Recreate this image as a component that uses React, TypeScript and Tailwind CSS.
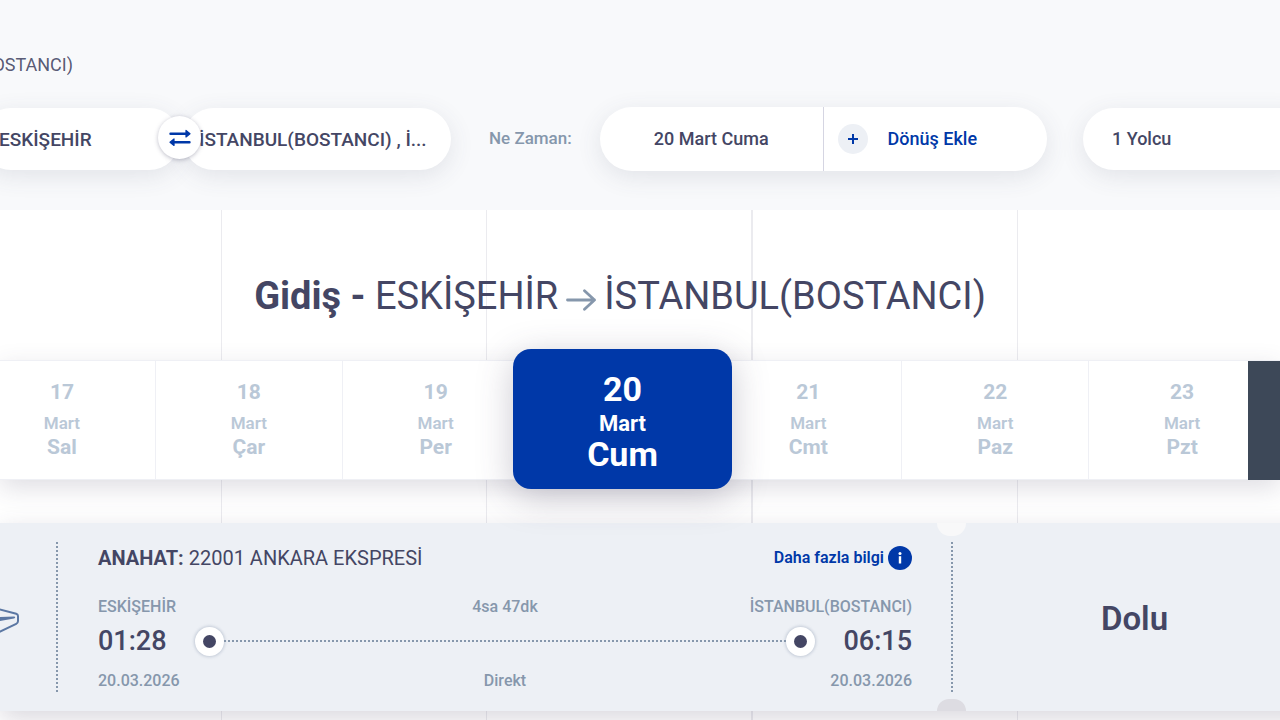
type Day = { day: string; month: string; weekday: string; selected?: boolean };

const days: Day[] = [
  { day: "17", month: "Mart", weekday: "Sal" },
  { day: "18", month: "Mart", weekday: "Çar" },
  { day: "19", month: "Mart", weekday: "Per" },
  { day: "20", month: "Mart", weekday: "Cum", selected: true },
  { day: "21", month: "Mart", weekday: "Cmt" },
  { day: "22", month: "Mart", weekday: "Paz" },
  { day: "23", month: "Mart", weekday: "Pzt" },
];

const pillShadow = "shadow-[0_6px_24px_rgba(68,70,100,0.12)]";

function SwapIcon() {
  return (
    <svg viewBox="0 0 22 18" className="h-[18px] w-[22px]" fill="#0038a8" stroke="#0038a8" strokeLinecap="round" strokeLinejoin="round" aria-hidden="true">
      <path d="M1.500 4.700H17M20.500 13.200H5" strokeWidth="2.400" />
      <path d="M17 1.400v6.600l4-3.300zM5 9.900v6.600l-4-3.300z" strokeWidth="1.200" />
    </svg>
  );
}

function SearchBar() {
  return (
    <form className="flex h-16 items-center">
      <div className="relative -ml-5 flex shrink-0 gap-[3px]">
        <input
          aria-label="Nereden"
          defaultValue="ESKİŞEHİR"
          className={`h-[62px] w-[200px] rounded-full bg-white pl-[19px] text-[19px] font-medium text-[#444664] outline-none ${pillShadow}`}
        />
        <input
          aria-label="Nereye"
          defaultValue="İSTANBUL(BOSTANCI) , İ..."
          className={`h-[62px] w-[268px] rounded-full bg-white pl-4 text-[19px] font-medium text-[#444664] outline-none ${pillShadow}`}
        />
        <button
          type="button"
          aria-label="Değiştir"
          className="absolute top-2 left-[178px] flex size-[43px] items-center justify-center rounded-full bg-white shadow-[0_1px_4px_rgba(68,70,100,0.35)]"
        >
          <SwapIcon />
        </button>
      </div>
      <span className="ml-[38px] w-[111px] shrink-0 text-[17px] font-medium whitespace-nowrap text-[#8697ac]">Ne Zaman:</span>
      <div className={`flex h-16 w-[447px] shrink-0 rounded-full bg-white ${pillShadow}`}>
        <button type="button" className="w-1/2 border-r border-[#d5d5e2] text-lg font-medium text-[#444664]">
          20 Mart Cuma
        </button>
        <button type="button" className="flex w-1/2 items-center gap-5 pl-[14px] text-lg font-medium text-[#0038a8]">
          <span className="flex size-[30px] items-center justify-center rounded-full bg-[#edf0f5]">
            <svg viewBox="0 0 10 10" className="size-[10px]" stroke="#0038a8" strokeWidth="2" aria-hidden="true">
              <path d="M5 0v10M0 5h10" />
            </svg>
          </span>
          Dönüş Ekle
        </button>
      </div>
      <button
        type="button"
        className={`-mr-10 ml-9 h-[62px] flex-1 rounded-full bg-white pl-[29px] text-left text-lg font-medium text-[#444664] ${pillShadow}`}
      >
        1 Yolcu
      </button>
    </form>
  );
}

function DayCell({ day, month, weekday, selected }: Day) {
  if (selected) {
    return (
      <div className="relative flex-1">
        <button
          type="button"
          aria-current="date"
          className="absolute -inset-x-[17px] -top-3 -bottom-[10px] z-10 flex flex-col items-center justify-center rounded-[18px] bg-[#0038a8] font-bold text-white shadow-[0_8px_36px_rgba(68,60,90,0.28)]"
        >
          <span className="text-[34px] leading-[46px]">{day}</span>
          <span className="text-[22px] leading-6">{month}</span>
          <span className="text-[34px] leading-9">{weekday}</span>
        </button>
      </div>
    );
  }
  return (
    <button
      type="button"
      className="flex flex-1 flex-col items-center justify-center border-r border-[#eff0f5] pb-2 text-[#bac8d7]"
    >
      <span className="text-[21px] leading-10 font-bold">{day}</span>
      <span className="text-[17px] leading-[22px] font-semibold">{month}</span>
      <span className="text-[21px] leading-[26px] font-bold">{weekday}</span>
    </button>
  );
}

function Stop() {
  return (
    <span className="flex size-[29px] shrink-0 items-center justify-center rounded-full bg-white shadow-[0_0_3px_1px_rgba(134,151,172,0.4)]">
      <span className="size-[13px] rounded-full bg-[#444664]" />
    </span>
  );
}

function TripCard() {
  return (
    <article className="relative -mr-9 flex h-[188px] bg-[#edf0f5] shadow-[0_8px_24px_rgba(68,60,90,0.2)]">
      <div className="my-[19px] flex w-[58px] shrink-0 items-center border-r-2 border-dotted border-[#8697ac]">
        <svg viewBox="0 0 20 34" className="h-[34px] w-5" fill="none" aria-hidden="true">
          <path d="M-4 8.500 16.200 13.800Q18 14.400 18 16v5q0 2-1.800 2.900L-4 33.500" stroke="#5b77a3" strokeWidth="2" />
          <path d="M-2 17.200 14 16.500q1.200 0 1.200.8t-1.200 1.100L-2 21.500z" fill="#5b77a3" />
        </svg>
      </div>
      <div className="flex flex-1 flex-col pt-5 pr-[39px] pl-10">
        <div className="flex h-[30px] items-center justify-between">
          <h2 className="text-xl text-[#444664]">
            <strong className="font-bold">ANAHAT:</strong> 22001 ANKARA EKSPRESİ
          </h2>
          <button type="button" className="flex items-center gap-1 text-base font-semibold text-[#0038a8]">
            Daha fazla bilgi
            <svg viewBox="0 0 24 24" className="size-6" aria-hidden="true">
              <circle cx="12" cy="12" r="12" fill="#0038a8" />
              <circle cx="12" cy="7.600" r="1.500" fill="#fff" />
              <path d="M12 10.200v7.300" stroke="#fff" strokeWidth="2.400" />
            </svg>
          </button>
        </div>
        <div className="mt-[23px] grid grid-cols-3 text-base leading-[22px] font-medium text-[#8697ac]">
          <span>ESKİŞEHİR</span>
          <span className="text-center">4sa 47dk</span>
          <span className="text-right">İSTANBUL(BOSTANCI)</span>
        </div>
        <div className="flex h-[46px] items-center text-[27px] font-medium text-[#444664]">
          <time className="w-[97px]">01:28</time>
          <Stop />
          <span className="flex-1 border-t-2 border-dotted border-[#8697ac]" />
          <Stop />
          <time className="w-[97px] text-right">06:15</time>
        </div>
        <div className="mt-[6px] grid grid-cols-3 text-base leading-[22px] font-medium text-[#8697ac]">
          <time>20.03.2026</time>
          <span className="text-center">Direkt</span>
          <time className="text-right">20.03.2026</time>
        </div>
      </div>
      <div className="my-[19px] flex w-[365px] shrink-0 items-center justify-center border-l-2 border-dotted border-[#8697ac] pt-[3px] text-[33px] font-semibold text-[#444664]">
        Dolu
      </div>
      <span className="absolute top-0 right-[350px] h-[13px] w-[29px] rounded-b-full bg-[#f8f8f9]" />
      <span className="absolute right-[350px] bottom-0 h-3 w-[29px] rounded-t-full bg-[#dddce2]" />
    </article>
  );
}

export default function App() {
  return (
    <div className="flex min-h-screen flex-col overflow-hidden bg-white font-['Roboto',sans-serif]">
      <header className="bg-[#f8f9fb] pt-[53px] pb-[39px]">
        <p className="mb-[30px] flex w-[73px] justify-end overflow-hidden text-lg leading-6 whitespace-nowrap text-[#444664]/90">
          (BOSTANCI)
        </p>
        <SearchBar />
      </header>
      <main className="relative isolate flex-1">
        <div className="absolute inset-0 -z-10 -mr-1 -ml-11 grid grid-cols-5" aria-hidden="true">
          <span className="border-r border-[#ebebef]" />
          <span className="border-r border-[#ebebef]" />
          <span className="border-r-2 border-[#ebebef]" />
          <span className="border-r border-[#ebebef]" />
        </div>
        <h1 className="flex h-[150px] items-center justify-center gap-2 pt-[22px] pr-10 text-[38px] whitespace-nowrap text-[#444664]">
          <span>
            <strong className="font-bold">Gidiş -</strong> ESKİŞEHİR
          </span>
          <svg viewBox="0 0 30 22" className="mt-2 h-[22px] w-[30px]" fill="none" stroke="#8697ac" strokeWidth="2.800" strokeLinecap="round" strokeLinejoin="round" aria-hidden="true">
            <path d="M1.500 11h27M18.500 1.800 28.500 11l-10 9.200" />
          </svg>
          <span>İSTANBUL(BOSTANCI)</span>
        </h1>
        <nav aria-label="Tarih" className="relative z-10 h-[120px] border-y border-[#eff0f5] bg-white shadow-[0_8px_24px_rgba(68,60,90,0.17)]">
          <div className="mr-1 -ml-[31px] flex h-full">
            {days.map((d) => (
              <DayCell key={d.day} {...d} />
            ))}
          </div>
          <button type="button" aria-label="Sonraki günler" className="absolute top-0 right-0 -bottom-px w-8 bg-[#3d4858]" />
        </nav>
        <div className="pt-[43px] pb-[9px]">
          <TripCard />
        </div>
      </main>
    </div>
  );
}
